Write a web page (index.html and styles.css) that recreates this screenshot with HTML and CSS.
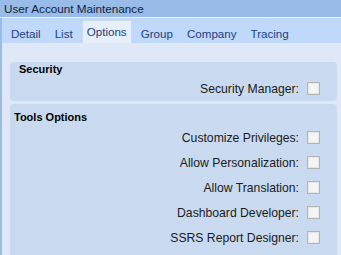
FILE: index.html
```html
<!DOCTYPE html>
<html lang="en-us">
  <head>
    <meta charset="utf-8">
    <title>User Account Maintenance</title>
    <link rel="stylesheet" href="styles.css">
  </head>
  <body>
    <section id=window>
      <div class="title-bar">User Account Maintenance</div>

      <ul class="tabs">
        <li>Detail</li>
        <li>List</li>
        <li class="active">Options</li>
        <li>Group</li>
        <li>Company</li>
        <li>Tracing</li>
      </ul>

      <div class="body">
        <div class="panel security">
          <h2>Security</h2>
          <div class="row">
            <label>Security Manager:</label>
            <span class="check"></span>
          </div>
        </div>

        <div class="panel tools">
          <h2>Tools Options</h2>
          <div class="row">
            <label>Customize Privileges:</label>
            <span class="check"></span>
          </div>
          <div class="row">
            <label>Allow Personalization:</label>
            <span class="check"></span>
          </div>
          <div class="row">
            <label>Allow Translation:</label>
            <span class="check"></span>
          </div>
          <div class="row">
            <label>Dashboard Developer:</label>
            <span class="check"></span>
          </div>
          <div class="row">
            <label>SSRS Report Designer:</label>
            <span class="check"></span>
          </div>
        </div>
      </div>
    </section>
  </body>
</html>
```

FILE: styles.css
```css
* {
  margin:0;
  padding:0;
  box-sizing:border-box;
}

body {
  font-family:"Liberation Sans", Arial, sans-serif;
  font-size:12px;
  color:#111;
  background:#dfe8f6;
  width:341px;
  height:255px;
  overflow:hidden;
}

#window {
  height:255px;
  border-left:2px solid #99bbe8;
  background:#dfe8f6;
}

.title-bar {
  height:18px;
  line-height:17px;
  padding-left:4px;
  font-size:11.7px;
  color:#15233a;
  background:#99bbe8;
  border-bottom:1px solid #e8eff9;
  margin-left:-2px;
}

.tabs {
  list-style:none;
  display:flex;
  align-items:flex-end;
  gap:4px;
  height:25px;
  padding-left:4px;
  background:#c0d9fa;
}

.tabs li {
  height:23px;
  padding:6px 4px 3px;
  line-height:14px;
  font-size:11.6px;
  color:#1c3f7f;
  border:1px solid transparent;
  border-bottom:0;
}

.tabs li.active {
  padding-top:4px;
  padding-bottom:5px;
  background:#e6eef9;
  border-color:#cbd9ec;
  border-radius:2px 2px 0 0;
}

.body {
  padding:19px 4px 0 8px;
}

.panel {
  background:#c9daf0;
  border-radius:4px;
  margin-bottom:3px;
  padding-right:17px;
}

.panel h2 {
  font-size:11px;
  font-weight:bold;
  line-height:14px;
  color:#000;
}

.security h2 {
  padding-left:9px;
}

.tools {
  padding-top:6px;
  height:160px;
}

.tools h2 {
  padding-left:4px;
  padding-bottom:1px;
}

.row {
  display:flex;
  justify-content:flex-end;
  align-items:center;
  height:25px;
  gap:8px;
}

.row label {
  font-size:12.2px;
  line-height:14px;
  color:#1a1a1a;
}

.check {
  width:13px;
  height:13px;
  background:#f4f4f4;
  border:1px solid #b4b4b4;
  box-shadow:inset 0 0 0 1px #e6e6e6;
}
```
